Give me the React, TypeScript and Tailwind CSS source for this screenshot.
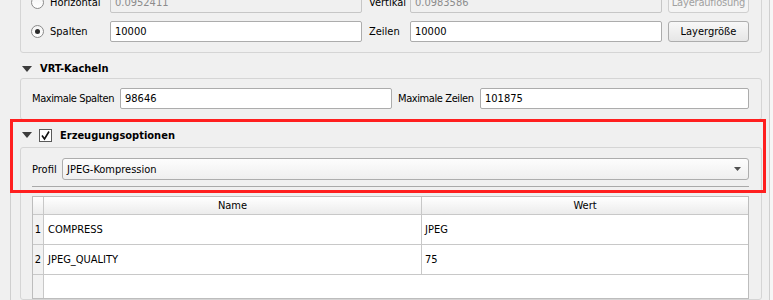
import React from "react";

function Radio({ checked }: { checked?: boolean }) {
  return (
    <div className="w-[13px] h-[13px] shrink-0 rounded-full border border-[#8a8a8a] bg-gradient-to-b from-[#f4f4f4] to-white flex items-center justify-center">
      {checked && <div className="w-[5px] h-[5px] rounded-full bg-[#2a2a2a]" />}
    </div>
  );
}

function Tri() {
  return (
    <svg width="10" height="6" viewBox="0 0 10 6" className="shrink-0">
      <polygon points="0,0 10,0 5,6" fill="#3c3c3c" />
    </svg>
  );
}

export default function App() {
  return (
    <div className="w-[773px] h-[300px] overflow-hidden bg-[#f0f0f0] flex text-[11px] leading-none whitespace-nowrap text-black font-['DejaVu_Sans_Condensed','DejaVu_Sans',sans-serif] font-stretch-condensed relative">
      <div className="w-[769px] shrink-0 flex flex-col">
        {/* Box 1 */}
        <div className="-mt-[20px] ml-[20px] w-[742px] h-[73px] shrink-0 border border-[#d5d5d5] rounded-[3px] pt-[11px] pb-[10px] pl-[10px] pr-[12px] flex flex-col gap-[8px]">
          <div className="h-[21px] flex items-center">
            <Radio />
            <span className="ml-[6px] w-[60px] shrink-0">Horizontal</span>
            <div className="w-[252px] h-[21px] shrink-0 border border-[#c6c6c6] rounded-[2px] bg-[#f0f0f0] flex items-center pl-[4px] text-[#8c8c8c]">0.0952411</div>
            <span className="ml-[7px] w-[41px] shrink-0">Vertikal</span>
            <div className="w-[252px] h-[21px] shrink-0 border border-[#c6c6c6] rounded-[2px] bg-[#f0f0f0] flex items-center pl-[4px] text-[#8c8c8c]">0.0983586</div>
            <div className="ml-[6px] w-[81px] h-[21px] shrink-0 border border-[#cfcfcf] rounded-[3px] bg-[#f4f4f4] flex items-center justify-center text-[#a0a0a0] overflow-hidden tracking-[-0.2px]">Layerauflösung</div>
          </div>
          <div className="h-[21px] flex items-center">
            <Radio checked />
            <span className="ml-[6px] w-[60px] shrink-0">Spalten</span>
            <div className="w-[252px] h-[21px] shrink-0 border border-[#acacac] rounded-[2px] bg-white flex items-center pl-[4px]">10000</div>
            <span className="ml-[7px] w-[41px] shrink-0">Zeilen</span>
            <div className="w-[252px] h-[21px] shrink-0 border border-[#acacac] rounded-[2px] bg-white flex items-center pl-[4px]">10000</div>
            <div className="ml-[6px] w-[81px] h-[21px] shrink-0 border border-[#adadad] rounded-[3px] bg-gradient-to-b from-[#f8f8f8] to-[#e6e6e6] flex items-center justify-center">Layergröße</div>
          </div>
        </div>

        {/* VRT header */}
        <div className="h-[25px] shrink-0 pt-[6px] pl-[22px] flex items-center">
          <Tri />
          <span className="ml-[8px] font-bold">VRT-Kacheln</span>
        </div>

        {/* Box 2 */}
        <div className="ml-[20px] w-[742px] h-[42px] shrink-0 border border-[#d5d5d5] rounded-[3px] pt-[9px] pb-[10px] pl-[11px] pr-[12px] flex items-center">
          <span className="w-[88px] shrink-0 tracking-[-0.4px]">Maximale Spalten</span>
          <div className="w-[272px] h-[21px] shrink-0 border border-[#acacac] rounded-[2px] bg-white flex items-center pl-[4px]">98646</div>
          <span className="ml-[6px] w-[82px] shrink-0 tracking-[-0.4px]">Maximale Zeilen</span>
          <div className="w-[269px] h-[21px] shrink-0 border border-[#acacac] rounded-[2px] bg-white flex items-center pl-[4px]">101875</div>
        </div>

        {/* Erzeugungsoptionen section */}
        <div className="ml-[10px] flex-1 border-l border-[#cfcfcf] flex flex-col">
          <div className="h-[27px] shrink-0 pt-[3px] pl-[11px] flex items-center">
            <Tri />
            <div className="ml-[7px] w-[13px] h-[13px] border border-[#5a5a5a] bg-white flex items-center justify-center">
              <svg width="11" height="11" viewBox="0 0 11 11">
                <polyline points="2,5.5 4.5,9 9,1.5" fill="none" stroke="#111" strokeWidth="1.6" />
              </svg>
            </div>
            <span className="ml-[8px] font-bold">Erzeugungsoptionen</span>
          </div>
          <div className="ml-[9px] w-[742px] flex-1 border border-[#d5d5d5] rounded-[3px] pt-[10px] pl-[11px] pr-[12px] flex flex-col">
            <div className="h-[22px] flex items-center">
              <span className="w-[30px] shrink-0">Profil</span>
              <div className="w-[687px] h-[22px] shrink-0 border border-[#adadad] rounded-[3px] bg-gradient-to-b from-[#fdfdfd] to-[#efefef] flex items-center pl-[4px] justify-between pr-[7px]">
                <span>JPEG-Kompression</span>
                <svg width="7" height="4" viewBox="0 0 7 4">
                  <polygon points="0,0 7,0 3.5,4" fill="#505050" />
                </svg>
              </div>
            </div>
            <div className="mt-[6px] w-[717px] h-[1px] bg-[#a9a9a9]" />
            <div className="mt-[9px] w-[717px] flex-1 border border-[#bdbdbd] bg-white flex flex-col">
              <div className="h-[18px] flex border-b border-[#c8c8c8] bg-gradient-to-b from-white to-[#ececec]">
                <div className="w-[11px] border-r border-[#c8c8c8]" />
                <div className="w-[378px] border-r border-[#c8c8c8] flex items-center justify-center">Name</div>
                <div className="flex-1 flex items-center justify-center">Wert</div>
              </div>
              <div className="h-[30px] flex border-b border-[#c8c8c8]">
                <div className="w-[11px] border-r border-[#c8c8c8] bg-[#f2f2f2] flex items-center justify-center">1</div>
                <div className="w-[378px] border-r border-[#c8c8c8] flex items-center pl-[4px]">COMPRESS</div>
                <div className="flex-1 flex items-center pl-[3px]">JPEG</div>
              </div>
              <div className="h-[30px] flex border-b border-[#c8c8c8]">
                <div className="w-[11px] border-r border-[#c8c8c8] bg-[#f2f2f2] flex items-center justify-center">2</div>
                <div className="w-[378px] border-r border-[#c8c8c8] flex items-center pl-[4px]">JPEG_QUALITY</div>
                <div className="flex-1 flex items-center pl-[3px]">75</div>
              </div>
              <div className="flex-1 flex">
                <div className="w-[11px] border-r border-[#c8c8c8] bg-[#f2f2f2]" />
                <div className="flex-1" />
              </div>
            </div>
          </div>
        </div>
      </div>
      <div className="flex-1 border-l border-[#cfcfcf] bg-[#f6f6f6]" />

      {/* red annotation frame */}
      <div className="absolute left-[10px] top-[119px] w-[756px] h-[74px] border-[3px] border-[#ff1f1f] pointer-events-none" />
    </div>
  );
}
